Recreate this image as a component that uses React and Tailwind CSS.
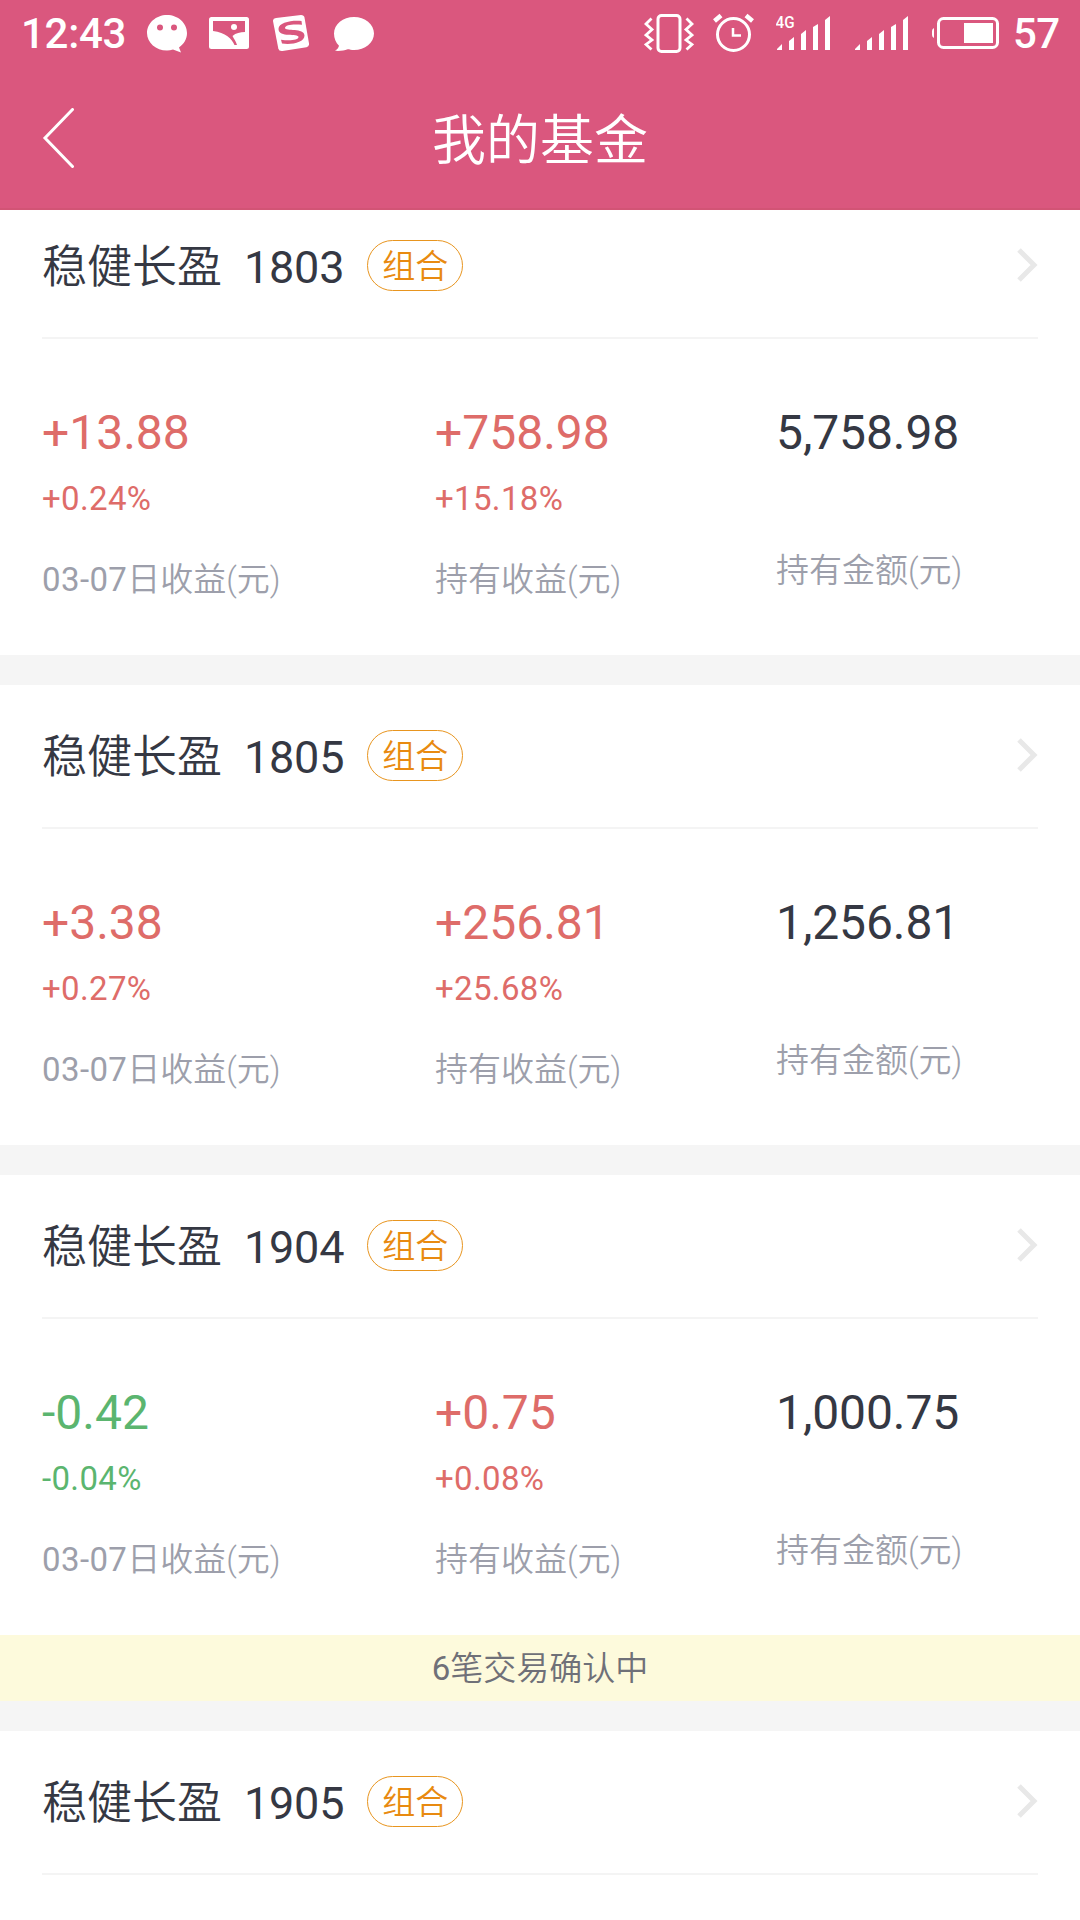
const funds = [
  {
    code: "1803",
    day: { value: "+13.88", rate: "+0.24%" },
    hold: { value: "+758.98", rate: "+15.18%" },
    amount: "5,758.98",
  },
  {
    code: "1805",
    day: { value: "+3.38", rate: "+0.27%" },
    hold: { value: "+256.81", rate: "+25.68%" },
    amount: "1,256.81",
  },
  {
    code: "1904",
    day: { value: "-0.42", rate: "-0.04%" },
    hold: { value: "+0.75", rate: "+0.08%" },
    amount: "1,000.75",
    pending: 6,
  },
  { code: "1905" },
];

const gainColor = (v) => (v.startsWith("-") ? "text-[#5bb56f]" : "text-[#de6c69]");

function SignalBars({ x }) {
  return (
    <g fill="#fff">
      <path d={`M${x} 50v-1l5-5v6z`} />
      <path d={`M${x + 12} 50v-9l5-4v13z`} />
      <path d={`M${x + 24} 50v-16l5-4v20z`} />
      <path d={`M${x + 36} 50v-23l5-3v26z`} />
      <path d={`M${x + 48} 50v-30l5-4v34z`} />
    </g>
  );
}

function StatusBar() {
  return (
    <div className="flex h-[68px] items-center justify-between pl-[21px] pr-[20px] text-[42px] font-medium leading-none text-white">
      <div className="flex items-center">
        <span className="w-[126px] tracking-[-0.3px]">12:43</span>
        {/* WeChat */}
        <svg className="h-12 w-10" viewBox="147 10 40 48">
          <path
            fill="#fff"
            fillRule="evenodd"
            d="M167 15c11 0 20 8 20 18 0 6-3 11-8 14.500l2 5-8-3c-2 .6-4 1-6 1-11 0-20-7.700-20-17.500S156 15 167 15zM160 24.500a3 3 0 100 6 3 3 0 000-6zM174 24.500a3 3 0 100 6 3 3 0 000-6z"
          />
        </svg>
        {/* Gallery */}
        <svg className="ml-[22px] h-12 w-10" viewBox="209 10 40 48">
          <rect x="209" y="17" width="40" height="32" rx="2.500" fill="#fff" />
          <path fill="#da577e" d="M213 21h32v11c-5 0-9 1-12.500 4 1.500 3 3.500 5.500 4.500 9h-2.500c-2.500-6-9-12.500-21.500-14z" />
          <circle cx="234" cy="27" r="3" fill="#fff" />
        </svg>
        {/* Sogou */}
        <svg className="ml-[24px] h-12 w-9" viewBox="273 10 36 48">
          <path fill="#fff" d="M276 18l25-3q3 0 3.500 2.500l4.500 26q.3 3-2.500 3.800l-24 3.700q-3.500.5-4.200-2.500L273 21q-.2-2.600 3-3z" />
          <path
            fill="#da577e"
            d="M301.500 21l.5 3.800c-8-1-17-.2-17 3.200 0 3.500 19.500-.5 19.500 7.500 0 7-13 9.500-22.500 8l-1-3.800c9 1.500 17.500.3 17.500-2.700 0-4-20 1-20-8 0-6.500 13-9 23-8z"
          />
        </svg>
        {/* Message */}
        <svg className="ml-[25px] h-12 w-10" viewBox="334 10 40 48">
          <path fill="#fff" d="M354 17c11 0 20 7.300 20 16.500S365 50 354 50c-2.500 0-4.500-.2-6.500-.8-3 1.300-7.500 2-12.500 1.600 2-1 3.500-2.800 4-5-3.200-3-5-7.500-5-12.300C334 24.300 343 17 354 17z" />
        </svg>
      </div>

      <div className="flex items-center">
        {/* Vibrate */}
        <svg className="h-12 w-[50px]" viewBox="644.500 10 50 48" fill="none" stroke="#fff">
          <rect x="658.500" y="15.500" width="22" height="36" rx="3.500" strokeWidth="3" />
          <path strokeWidth="2.800" d="M652 18.500l-5.500 5.500 6 5.500-6 5.500 6 5-6 4.500 5.500 5M687 18.500l5.500 5.500-6 5.500 6 5.500-6 5 6 4.500-5.500 5" />
        </svg>
        {/* Alarm */}
        <svg className="ml-[19px] h-12 w-[42px]" viewBox="713 10 42 48" fill="none" stroke="#fff">
          <circle cx="733.500" cy="34.500" r="16" strokeWidth="3" />
          <path strokeWidth="2.500" d="M733 28v7.500h8" />
          <path strokeWidth="4.500" d="M714.500 21l6.500-5.500M752.500 21l-6.500-5.500" />
        </svg>
        {/* Mobile networks */}
        <svg className="ml-[21px] h-12 w-[55px]" viewBox="776 10 55 48">
          <text x="775.500" y="28" fill="#fff" fontSize="17" fontWeight="500" textLength="19" lengthAdjust="spacingAndGlyphs">4G</text>
          <SignalBars x={777} />
        </svg>
        <svg className="ml-[24px] h-12 w-[54px]" viewBox="855 10 54 48">
          <SignalBars x={855} />
        </svg>
        {/* Battery */}
        <svg className="ml-[23px] h-12 w-[68px]" viewBox="932 10 68 48">
          <rect x="938.500" y="18.500" width="59" height="29" rx="5" fill="none" stroke="#fff" strokeWidth="3" />
          <path fill="#fff" d="M934 28v10q-2-1-2-3v-4q0-2 2-3zM964 23h29v20h-29z" />
        </svg>
        <span className="ml-[13px] w-[47px] tracking-[-0.5px]">57</span>
      </div>
    </div>
  );
}

function NavBar() {
  return (
    <div className="flex h-[142px] items-center justify-between border-b-2 border-[#d25475] px-[42px] text-white">
      <svg className="mb-px h-[60px] w-8" viewBox="0 0 32 60" fill="none" stroke="#fff" strokeWidth="3" strokeLinecap="round">
        <path d="M30.500 1.500L3 30l27.500 28.500" />
      </svg>
      <h1 className="pt-[8px] text-[54px] leading-none">我的基金</h1>
      <div className="w-8" />
    </div>
  );
}

function Figure({ item, label, className }) {
  return (
    <div className={className}>
      <p className={`text-[48px] font-normal leading-[56px] ${gainColor(item.value)}`}>{item.value}</p>
      <p className={`mt-[19px] text-[33px] font-normal leading-[38px] tracking-[0.35px] ${gainColor(item.rate)}`}>{item.rate}</p>
      <p className="mt-[40px] text-[33px] leading-[44px] text-[#9d9fab]">{label}</p>
    </div>
  );
}

function FundCard({ fund }) {
  return (
    <section className="mb-[30px] bg-white">
      <div className="mx-[42px] flex h-[144px] items-center border-b-2 border-[#f4f4f4]">
        <h2 className="whitespace-pre pt-[3px] text-[45px] leading-none text-[#353843]">
          稳健长盈
          <span className="font-normal tracking-[-0.2px]">{"  " + fund.code}</span>
        </h2>
        <span className="mb-px ml-[23px] flex h-[51px] w-[96px] items-center justify-center rounded-full border-[1.5px] border-[#e8951f] pt-px text-[33px] leading-none text-[#e88a10]">
          组合
        </span>
        <svg className="mb-[2px] ml-auto h-9 w-[22px]" viewBox="0 0 22 36" fill="none" stroke="#e8e8e8" strokeWidth="5">
          <path d="M3 3l15 15L3 33" />
        </svg>
      </div>
      {fund.day && (
        <div className="flex h-[316px] px-[42px] pt-[66px]">
          <Figure
            className="w-[393px]"
            item={fund.day}
            label={<><span className="font-normal tracking-[0.4px]">03-07</span>日收益(元)</>}
          />
          <Figure className="w-[341px]" item={fund.hold} label="持有收益(元)" />
          <div>
            <p className="text-[48px] font-normal leading-[56px] tracking-[-0.1px] text-[#353843]">{fund.amount}</p>
            <p className="mt-[88px] text-[33px] leading-[44px] text-[#9d9fab]">持有金额(元)</p>
          </div>
        </div>
      )}
      {fund.pending && (
        <p className="h-[66px] bg-[#fdfadc] pt-px text-center text-[33px] leading-[66px] text-[#6f7078]">
          <span className="font-normal">{fund.pending}</span>笔交易确认中
        </p>
      )}
    </section>
  );
}

export default function App() {
  return (
    <div className="flex h-[1920px] w-[1080px] flex-col overflow-hidden bg-white font-['Roboto','Noto_Sans_CJK_SC',sans-serif] font-[350]">
      <header className="h-[210px] shrink-0 bg-[#da577e]">
        <StatusBar />
        <NavBar />
      </header>
      {/* list is scrolled slightly under the header */}
      <main className="min-h-0 flex-1 overflow-hidden">
        <div className="-mt-[15px] bg-[#f5f5f5]">
          {funds.map((fund) => (
            <FundCard key={fund.code} fund={fund} />
          ))}
        </div>
      </main>
    </div>
  );
}
